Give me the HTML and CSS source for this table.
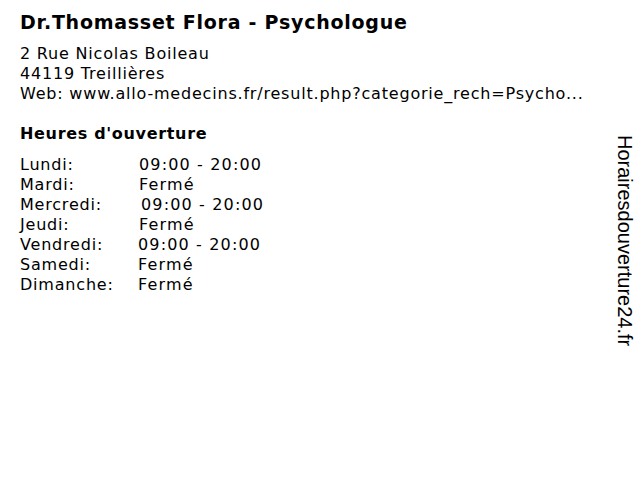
FILE: index.html
```html
<!DOCTYPE html>
<html lang="fr">
<head>
<meta charset="utf-8">
<link rel="stylesheet" href="styles.css">
</head>
<body>
<div class="page">
  <main class="content">
    <h1 class="title">Dr.Thomasset Flora - Psychologue</h1>
    <div class="address">
      <div>2 Rue Nicolas Boileau</div>
      <div>44119 Treillières</div>
      <div>Web: www.allo-medecins.fr/result.php?categorie_rech=Psycho...</div>
    </div>
    <h2 class="heading">Heures d'ouverture</h2>
    <div class="hours">
      <span class="day">Lundi:</span><span class="time">09:00 - 20:00</span>
      <span class="day">Mardi:</span><span class="time">Fermé</span>
      <span class="day">Mercredi:</span><span class="time shift2">09:00 - 20:00</span>
      <span class="day">Jeudi:</span><span class="time">Fermé</span>
      <span class="day">Vendredi:</span><span class="time shiftm1">09:00 - 20:00</span>
      <span class="day">Samedi:</span><span class="time shiftm1">Fermé</span>
      <span class="day">Dimanche:</span><span class="time shiftm1">Fermé</span>
    </div>
  </main>
  <aside class="side"><span class="brand">Horairesdouverture24.fr</span></aside>
</div>
</body>
</html>
```

FILE: styles.css
```css
html, body {
  margin: 0;
  padding: 0;
  background: #fff;
}
.page {
  width: 640px;
  height: 480px;
  display: flex;
  color: #000;
  font-family: "DejaVu Sans", Verdana, sans-serif;
}
.content {
  flex: 1;
  padding: 10px 0 0 20px;
}
.title {
  margin: 0;
  font-size: 19px;
  font-weight: bold;
  line-height: 24px;
  letter-spacing: 0.75px;
}
.address {
  margin-top: 10px;
  font-size: 16px;
  line-height: 20px;
  letter-spacing: 0.8px;
}
.heading {
  margin: 19px 0 0;
  font-size: 16px;
  font-weight: bold;
  line-height: 22px;
  letter-spacing: 0.67px;
}
.hours {
  margin-top: 10px;
  display: grid;
  grid-template-columns: 119px auto;
  justify-content: start;
  font-size: 16px;
  line-height: 20px;
  letter-spacing: 0.8px;
}
.time { letter-spacing: 1.15px; }
.shift2 { margin-left: 2px; }
.shiftm1 { margin-left: -1px; }
.side {
  width: 40px;
  position: relative;
}
.brand {
  position: absolute;
  left: 13px;
  top: 135px;
  writing-mode: vertical-rl;
  font-family: "Liberation Sans", Arial, sans-serif;
  font-size: 20px;
  line-height: 24px;
  white-space: nowrap;
}
```
